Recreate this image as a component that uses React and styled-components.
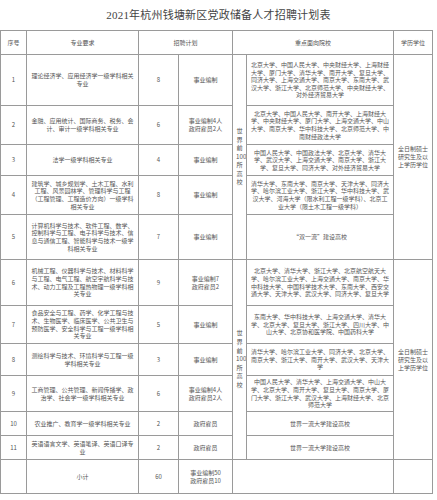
import React from 'react';
import styled, { createGlobalStyle } from 'styled-components';

const GlobalStyle = createGlobalStyle`
  html, body {
    margin: 0;
    padding: 0;
    background: #fff;
  }
  body {
    font-family: "Noto Sans CJK SC", "Liberation Sans", sans-serif;
    color: #555;
  }
`;

const Page = styled.div`
  width: 437px;
  overflow: hidden;
`;

const Title = styled.h1`
  margin: 0;
  height: 30px;
  line-height: 30px;
  text-align: center;
  font-family: "Liberation Serif", "Noto Sans CJK SC", serif;
  font-weight: 400;
  font-size: 11px;
  color: #444;
  letter-spacing: 0.2px;
`;

const Table = styled.table`
  width: 432px;
  table-layout: fixed;
  border-collapse: collapse;
  font-size: 6px;
  line-height: 7.6px;
`;

const Cell = styled.td`
  border: 1px solid #9a9a9a;
  padding: 0 ${({ pad }) => (pad === undefined ? 4 : pad)}px;
  text-align: center;
  vertical-align: middle;
  height: ${({ h }) => (h ? `${h}px` : 'auto')};
  overflow: hidden;
`;

const HeadCell = styled.th`
  border: 1px solid #9a9a9a;
  height: 21px;
  font-weight: 400;
  font-size: 6px;
  text-align: center;
  vertical-align: middle;
`;

const SchoolCell = styled(Cell)`
  text-align: center;
  padding: 0 4px;
`;

const GroupCell = styled(Cell)`
  padding: 0 3px;
  line-height: 8.6px;
  font-size: 6.2px;
`;

const DegreeCell = styled(Cell)`
  padding: 0 3px;
  line-height: 8px;
`;

const rows = [
  {
    no: '1',
    major: '理论经济学、应用经济学一级学科相关专业',
    count: '8',
    type: ['事业编制'],
    schools:
      '北京大学、中国人民大学、中央财经大学、上海财经大学、厦门大学、清华大学、南开大学、复旦大学、同济大学、上海交通大学、南京大学、东南大学、武汉大学、浙江大学、北京师范大学、中央财经大学、对外经济贸易大学',
    h: 50,
  },
  {
    no: '2',
    major: '金融、应用统计、国际商务、税务、会计、审计一级学科相关专业',
    count: '6',
    type: ['事业编制4人', '政府雇员2人'],
    schools:
      '北京大学、中国人民大学、南开大学、上海财经大学、中央财经大学、厦门大学、上海交通大学、中山大学、南京大学、华中科技大学、北京师范大学、中南财经政法大学',
    h: 38,
  },
  {
    no: '3',
    major: '法学一级学科相关专业',
    count: '4',
    type: ['事业编制'],
    schools:
      '中国人民大学、中国政法大学、北京大学、清华大学、武汉大学、上海交通大学、南京大学、浙江大学、复旦大学、同济大学、对外经济贸易大学',
    h: 30,
  },
  {
    no: '4',
    major:
      '建筑学、城乡规划学、土木工程、水利工程、风景园林学、管理科学与工程（工程管理、工程造价方向）一级学科相关专业',
    count: '8',
    type: ['事业编制'],
    schools:
      '清华大学、东南大学、南京大学、天津大学、同济大学、哈尔滨工业大学、浙江大学、华中科技大学、武汉大学、河海大学（限水利工程一级学科）、北京工业大学（限土木工程一级学科）',
    h: 38,
  },
  {
    no: '5',
    major:
      '计算机科学与技术、软件工程、数学、控制科学与工程、电子科学与技术、信息与通信工程、智能科学与技术一级学科相关专业',
    count: '7',
    type: ['事业编制'],
    schools: '“双一流”建设高校',
    h: 44,
  },
  {
    no: '6',
    major:
      '机械工程、仪器科学与技术、材料科学与工程、电气工程、航空宇航科学与技术、动力工程及工程热物理一级学科相关专业',
    count: '9',
    type: ['事业编制7', '政府雇员2'],
    schools:
      '北京大学、清华大学、浙江大学、北京航空航天大学、哈尔滨工业大学、上海交通大学、南京大学、华中科技大学、中国科学技术大学、东南大学、西安交通大学、天津大学、武汉大学、同济大学、复旦大学',
    h: 45,
  },
  {
    no: '7',
    major:
      '食品安全与工程、药学、化学工程与技术、生物医学、临床医学、公共卫生与预防医学、安全科学与工程一级学科相关专业',
    count: '5',
    type: ['事业编制'],
    schools:
      '东南大学、华中科技大学、上海交通大学、清华大学、北京大学、复旦大学、浙江大学、四川大学、中山大学、北京协和医学院、中国药科大学',
    h: 37,
  },
  {
    no: '8',
    major: '测绘科学与技术、环境科学与工程一级学科相关专业',
    count: '3',
    type: ['事业编制'],
    schools:
      '清华大学、哈尔滨工业大学、同济大学、北京大学、南京大学、浙江大学、南开大学、武汉大学、天津大学',
    h: 31,
  },
  {
    no: '9',
    major: '工商管理、公共管理、新闻传播学、政治学、社会学一级学科相关专业',
    count: '6',
    type: ['事业编制4人', '政府雇员2人'],
    schools:
      '中国人民大学、清华大学、上海交通大学、中山大学、北京大学、南开大学、复旦大学、南京大学、厦门大学、浙江大学、武汉大学、上海财经大学、北京师范大学',
    h: 35,
  },
  {
    no: '10',
    major: '农业推广、教育学一级学科相关专业',
    count: '2',
    type: ['政府雇员'],
    schools: '世界一流大学建设高校',
    h: 23,
  },
  {
    no: '11',
    major: '英语语言文学、英语笔译、英语口译专业',
    count: '2',
    type: ['政府雇员'],
    schools: '世界一流大学建设高校',
    h: 23,
  },
];

const groups = { 0: 5, 5: 6 };

function Lines({ items }) {
  return items.map((t, i) => (
    <React.Fragment key={t}>
      {i > 0 && <br />}
      {t}
    </React.Fragment>
  ));
}

export default function App() {
  return (
    <Page>
      <GlobalStyle />
      <Title>2021年杭州钱塘新区党政储备人才招聘计划表</Title>
      <Table>
        <colgroup>
          <col style={{ width: 26 }} />
          <col style={{ width: 112 }} />
          <col style={{ width: 40 }} />
          <col style={{ width: 54 }} />
          <col style={{ width: 14 }} />
          <col style={{ width: 147 }} />
          <col style={{ width: 39 }} />
        </colgroup>
        <thead>
          <tr>
            <HeadCell>序号</HeadCell>
            <HeadCell>专业要求</HeadCell>
            <HeadCell colSpan={2}>招聘计划</HeadCell>
            <HeadCell colSpan={2}>重点面向院校</HeadCell>
            <HeadCell>学历学位</HeadCell>
          </tr>
        </thead>
        <tbody>
          {rows.map((r, i) => (
            <tr key={r.no}>
              <Cell h={r.h}>{r.no}</Cell>
              <Cell>{r.major}</Cell>
              <Cell>{r.count}</Cell>
              <Cell pad={2}>
                <Lines items={r.type} />
              </Cell>
              {groups[i] && (
                <GroupCell rowSpan={groups[i]}>世界前100所高校</GroupCell>
              )}
              <SchoolCell>{r.schools}</SchoolCell>
              {groups[i] && (
                <DegreeCell rowSpan={groups[i]}>
                  全日制硕士研究生及以上学历学位
                </DegreeCell>
              )}
            </tr>
          ))}
          <tr>
            <Cell h={33} />
            <Cell>小计</Cell>
            <Cell>60</Cell>
            <Cell pad={2}>
              <Lines items={['事业编制50', '政府雇员10']} />
            </Cell>
            <Cell colSpan={2} />
            <Cell />
          </tr>
        </tbody>
      </Table>
    </Page>
  );
}
